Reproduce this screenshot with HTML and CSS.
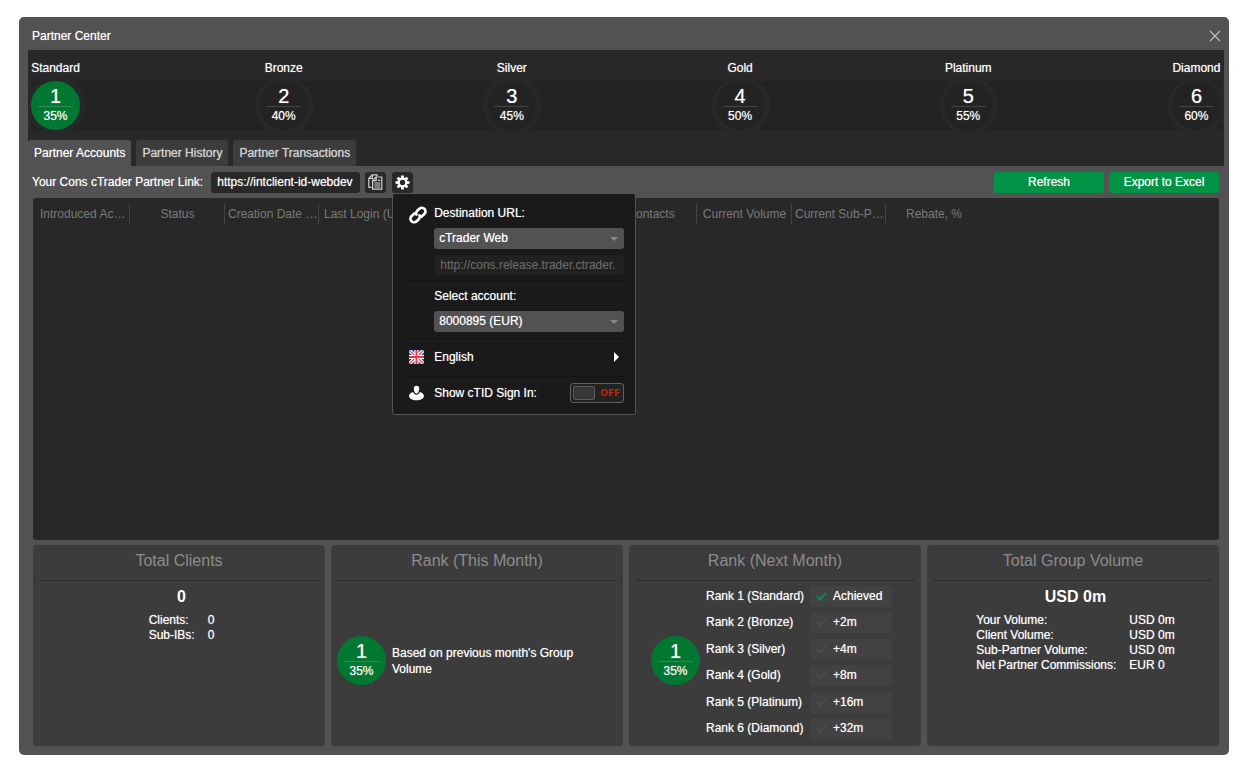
FILE: index.html
```
<!DOCTYPE html>
<html lang="en">
<head>
  <meta charset="UTF-8">
  <meta name="viewport" content="width=device-width, initial-scale=1.0">
  <title>Partner Center</title>
  <link rel="stylesheet" href="styles.css">
</head>
<body>
  <div class="window">
    <header class="titlebar">
      <h1>Partner Center</h1>
      <button type="button" class="close-btn" aria-label="Close">
        <svg width="12" height="12" viewBox="0 0 12 12"><path d="M1 1l10 10M11 1L1 11" stroke="#c4c4c4" stroke-width="1.1" fill="none"/></svg>
      </button>
    </header>

    <section class="ranks">
      <div class="rank-names">
        <span>Standard</span>
        <span>Bronze</span>
        <span>Silver</span>
        <span>Gold</span>
        <span>Platinum</span>
        <span>Diamond</span>
      </div>
      <div class="rank-track">
        <div class="badge active"><b>1</b><span>35%</span></div>
        <div class="badge"><b>2</b><span>40%</span></div>
        <div class="badge"><b>3</b><span>45%</span></div>
        <div class="badge"><b>4</b><span>50%</span></div>
        <div class="badge"><b>5</b><span>55%</span></div>
        <div class="badge"><b>6</b><span>60%</span></div>
      </div>
      <nav class="tabs">
        <button type="button" class="tab active">Partner Accounts</button>
        <button type="button" class="tab">Partner History</button>
        <button type="button" class="tab">Partner Transactions</button>
      </nav>
    </section>

    <div class="toolbar">
      <label for="partnerLink">Your Cons cTrader Partner Link:</label>
      <input type="text" id="partnerLink" class="link-input" value="https://intclient-id-webdev" readonly>
      <button type="button" class="icon-btn" aria-label="Copy link">
        <svg width="15" height="16" viewBox="0 0 15 16" fill="none" stroke="#d0d0d0" stroke-width="1.2">
          <path d="M3.500 13.400H.8V4.200L4.200.8H9V2.200M.8 4.400H4.300V.8"/>
          <path d="M4.600 6.400L8 3H13.800V15.200H4.600ZM4.600 6.600H8.200V3"/>
          <path d="M9.800 6.400H12.300M6.400 9H12.300M6.400 11H12.300M6.400 13H12.300"/>
        </svg>
      </button>
      <div class="settings">
        <button type="button" class="icon-btn" id="settingsBtn" aria-label="Link settings" aria-controls="settingsMenu">
          <svg width="15" height="15" viewBox="-7.500 -7.500 15 15">
            <g fill="#fff">
              <path id="tooth" d="M-1.300 -7H1.300L1.600 -4H-1.600Z"/>
              <use href="#tooth" transform="rotate(45)"/>
              <use href="#tooth" transform="rotate(90)"/>
              <use href="#tooth" transform="rotate(135)"/>
              <use href="#tooth" transform="rotate(180)"/>
              <use href="#tooth" transform="rotate(225)"/>
              <use href="#tooth" transform="rotate(270)"/>
              <use href="#tooth" transform="rotate(315)"/>
            </g>
            <circle r="3.800" fill="none" stroke="#fff" stroke-width="2.200"/>
          </svg>
        </button>

        <div class="menu" id="settingsMenu">
          <div class="menu-group">
            <svg class="menu-icon" width="20" height="20" viewBox="-10 -10 20 20" fill="none" stroke="#fff" stroke-width="2.700" stroke-linecap="round">
              <g transform="rotate(-43)">
                <path d="M-.8 -1.400A3.600 3.600 0 0 1 2.300 -3.600H5.300A3.600 3.600 0 0 1 5.300 3.600H2.300A3.600 3.600 0 0 1 .6 3"/>
                <path d="M.8 1.400A3.600 3.600 0 0 1 -2.300 3.600H-5.300A3.600 3.600 0 0 1 -5.300 -3.600H-2.300A3.600 3.600 0 0 1 -.6 -3"/>
              </g>
            </svg>
            <div class="menu-fields">
              <label for="destination">Destination URL:</label>
              <div class="select">
                <select id="destination">
                  <option>cTrader Web</option>
                </select>
              </div>
              <input type="text" class="url-input" value="http://cons.release.trader.ctrader." aria-label="URL" disabled>
            </div>
          </div>
          <div class="menu-group account">
            <span class="menu-icon"></span>
            <div class="menu-fields">
              <label for="account">Select account:</label>
              <div class="select">
                <select id="account">
                  <option>8000895 (EUR)</option>
                </select>
              </div>
            </div>
          </div>
          <button type="button" class="menu-row language">
            <svg class="menu-icon" width="20" height="16" viewBox="0 0 20 16">
              <clipPath id="flag"><rect x="1" y="1" width="15" height="14" rx="2"/></clipPath>
              <g clip-path="url(#flag)">
                <path d="M1 1H16V15H1Z" fill="#2c55b5"/>
                <path d="M1 1L16 15M16 1L1 15" stroke="#fff" stroke-width="3.400"/>
                <path d="M1 1L16 15M16 1L1 15" stroke="#ed3d45" stroke-width="1.200"/>
                <path d="M8.500 1V15M1 8H16" stroke="#fff" stroke-width="4"/>
                <path d="M8.500 1V15M1 8H16" stroke="#ee3640" stroke-width="2"/>
              </g>
            </svg>
            <span>English</span>
            <i class="arrow"></i>
          </button>
          <div class="menu-row">
            <svg class="menu-icon" width="20" height="16" viewBox="0 0 20 16" fill="#fff">
              <path d="M8.500 .8C10.300 .8 11.300 2 11.200 3.800C11.100 5.500 10.300 8.600 8.500 8.600C6.700 8.600 5.900 5.500 5.800 3.800C5.700 2 6.700 .8 8.500 .8Z"/>
              <path d="M5.200 7C5.800 9 7 9.700 8.500 9.700S11.200 9 11.800 7C14 7.500 15.900 8.900 15.900 11C15.900 13.600 13 15.200 8.500 15.200S1.100 13.600 1.100 11C1.100 8.900 3 7.500 5.200 7Z"/>
            </svg>
            <label for="showSignIn">Show cTID Sign In:</label>
            <label class="toggle">
              <input type="checkbox" id="showSignIn">
              <span>OFF</span>
            </label>
          </div>
        </div>
      </div>
      <div class="actions">
        <button type="button" class="green-btn">Refresh</button>
        <button type="button" class="green-btn">Export to Excel</button>
      </div>
    </div>

    <div class="table-wrap">
      <table>
        <thead>
          <tr>
            <th>Introduced Accounts</th>
            <th>Status</th>
            <th>Creation Date (UTC+0)</th>
            <th>Last Login (UTC+0)</th>
            <th>Country</th>
            <th>Balance</th>
            <th>Contacts</th>
            <th>Current Volume</th>
            <th>Current Sub-Partner Volume</th>
            <th>Rebate, %</th>
            <th class="filler"></th>
          </tr>
        </thead>
        <tbody></tbody>
      </table>
    </div>

    <div class="cards">
      <section class="card">
        <h2>Total Clients</h2>
        <div class="card-body">
          <p class="total">0</p>
          <table class="stats">
            <tr><th>Clients:</th><td>0</td></tr>
            <tr><th>Sub-IBs:</th><td>0</td></tr>
          </table>
        </div>
      </section>
      <section class="card">
        <h2>Rank (This Month)</h2>
        <div class="card-body rank-now">
          <div class="badge active"><b>1</b><span>35%</span></div>
          <p>Based on previous month's Group Volume</p>
        </div>
      </section>
      <section class="card">
        <h2>Rank (Next Month)</h2>
        <div class="card-body rank-next">
          <div class="badge active"><b>1</b><span>35%</span></div>
          <ul class="rank-list">
            <li>Rank 1 (Standard) <span class="pill done"><svg width="11" height="9" viewBox="0 0 11 9"><path d="M1 4.500L4 7.300L10 1"/></svg>Achieved</span></li>
            <li>Rank 2 (Bronze) <span class="pill"><svg width="11" height="9" viewBox="0 0 11 9"><path d="M1 4.500L4 7.300L10 1"/></svg>+2m</span></li>
            <li>Rank 3 (Silver) <span class="pill"><svg width="11" height="9" viewBox="0 0 11 9"><path d="M1 4.500L4 7.300L10 1"/></svg>+4m</span></li>
            <li>Rank 4 (Gold) <span class="pill"><svg width="11" height="9" viewBox="0 0 11 9"><path d="M1 4.500L4 7.300L10 1"/></svg>+8m</span></li>
            <li>Rank 5 (Platinum) <span class="pill"><svg width="11" height="9" viewBox="0 0 11 9"><path d="M1 4.500L4 7.300L10 1"/></svg>+16m</span></li>
            <li>Rank 6 (Diamond) <span class="pill"><svg width="11" height="9" viewBox="0 0 11 9"><path d="M1 4.500L4 7.300L10 1"/></svg>+32m</span></li>
          </ul>
        </div>
      </section>
      <section class="card">
        <h2>Total Group Volume</h2>
        <div class="card-body">
          <p class="total">USD 0m</p>
          <table class="stats">
            <tr><th>Your Volume:</th><td>USD 0m</td></tr>
            <tr><th>Client Volume:</th><td>USD 0m</td></tr>
            <tr><th>Sub-Partner Volume:</th><td>USD 0m</td></tr>
            <tr><th>Net Partner Commissions:</th><td>EUR 0</td></tr>
          </table>
        </div>
      </section>
    </div>
  </div>
</body>
</html>
```

FILE: styles.css
```
* {
  box-sizing: border-box;
}

body {
  margin: 0;
  padding: 17px 27px 23px 19px;
  background: #ffffff;
  color: #ffffff;
  font-family: "Liberation Sans", Arial, sans-serif;
  font-size: 12px;
  line-height: 15px;
  text-shadow: 0 0 1px rgba(255, 255, 255, 0.6);
}

h1, h2, p, ul {
  margin: 0;
  padding: 0;
  font-weight: normal;
}

button, input, select {
  margin: 0;
  padding: 0;
  border: none;
  color: inherit;
  font: inherit;
  text-shadow: inherit;
}

button {
  cursor: pointer;
}

.window {
  display: flex;
  flex-direction: column;
  min-height: calc(100vh - 40px);
  padding: 0 5px 9px 9px;
  border-radius: 5px;
  background: #525252;
}

.titlebar {
  display: flex;
  align-items: center;
  justify-content: space-between;
  height: 33px;
  padding: 4px 3px 0 4px;
}

.titlebar h1 {
  padding-top: 2px;
  font-size: 12px;
}

.close-btn {
  width: 12px;
  height: 12px;
  background: none;
}

.close-btn svg {
  display: block;
}

/* ranks */
.ranks {
  background: #282828;
}

.rank-names {
  display: flex;
  justify-content: space-between;
  padding: 11px 3px 5px;
}

.rank-names span {
  display: flex;
  justify-content: center;
  width: 49px;
}

.rank-track {
  display: flex;
  justify-content: space-between;
  margin: 0 3px;
  overflow: hidden;
  background: #232323;
}

.badge {
  display: flex;
  flex: none;
  flex-direction: column;
  align-items: center;
  width: 49px;
  height: 49px;
  padding-top: 5px;
  border-radius: 50%;
}

.badge b {
  width: 35px;
  height: 21px;
  border-bottom: 1px solid #444444;
  font-size: 20px;
  font-weight: normal;
  line-height: 20px;
  text-align: center;
}

.badge span {
  line-height: 18px;
}

.badge.active {
  background: #007832;
}

.badge.active b {
  border-color: #2b8d53;
}

.rank-track .badge {
  box-shadow: 0 0 0 4px #282828, 1px 0 0 4px #1d3328;
}

.tabs {
  display: flex;
  gap: 5px;
  padding-top: 10px;
}

.tab {
  height: 26px;
  padding: 0 6px;
  border-radius: 3px 3px 0 0;
  background: #3c3c3c;
  color: #d4d4d4;
}

.tab.active {
  background: #525252;
  color: #ffffff;
}

/* toolbar */
.toolbar {
  display: flex;
  align-items: center;
  height: 32px;
  padding: 0 5px 0 4px;
}

.link-input {
  width: 149px;
  height: 21px;
  margin: 0 5px 0 8px;
  padding: 0 6px;
  border-radius: 3px;
  background: #282828;
}

.icon-btn {
  display: flex;
  align-items: center;
  justify-content: center;
  width: 21px;
  height: 21px;
  border-radius: 3px;
  background: #282828;
}

.settings {
  position: relative;
  margin-left: 6px;
}

.actions {
  display: flex;
  gap: 5px;
  margin-left: auto;
}

.green-btn {
  width: 110px;
  height: 21px;
  border-radius: 3px;
  background: #009245;
}

/* settings menu */
.menu {
  position: absolute;
  top: 100%;
  left: 0;
  z-index: 1;
  width: 244px;
  padding: 0 11px 4px 12px;
  border: 1px solid #555555;
  border-radius: 3px;
  background: #1a1a1a;
}

.menu-group, .menu-row {
  display: flex;
  border-bottom: 1px solid #131313;
}

.menu-group {
  padding: 11px 0 5px 3px;
}

.menu-group.account {
  padding: 7px 0 0 3px;
}

.menu-row {
  align-items: center;
  width: 100%;
  height: 38px;
  padding-left: 3px;
  background: none;
}

.menu-row:last-child {
  height: 33px;
  border-bottom: none;
}

.menu-icon {
  flex: none;
  width: 20px;
  margin-right: 6px;
}

.menu-fields {
  flex: 1;
  min-width: 0;
}

.menu-fields label {
  display: block;
  line-height: 17px;
}

.select {
  position: relative;
  margin: 6px 0;
}

.select::after {
  content: "";
  position: absolute;
  top: 9px;
  right: 6px;
  border: 4px solid transparent;
  border-top-color: #888888;
  border-bottom: none;
  pointer-events: none;
}

.select select {
  display: block;
  appearance: none;
  width: 100%;
  height: 21px;
  padding: 0 5px;
  border-radius: 3px;
  background: #525252;
}

.url-input {
  display: block;
  width: 100%;
  height: 20px;
  padding: 0 6px;
  border-radius: 3px;
  background: #212121;
  color: #6f6f6f;
  text-shadow: none;
}

.arrow {
  margin: 0 5px 0 auto;
  border: 5px solid transparent;
  border-left-color: #ffffff;
  border-right: none;
}

.toggle {
  display: flex;
  align-items: center;
  justify-content: space-between;
  width: 54px;
  height: 20px;
  margin-left: auto;
  padding: 0 3px 0 2px;
  border: 1px solid #606060;
  border-radius: 3px;
  background: #222222;
}

.toggle input {
  appearance: none;
  width: 22px;
  height: 14px;
  border: 1px solid #5a5a5a;
  border-radius: 2px;
  background: #363636;
}

.toggle span {
  color: #c02408;
  font-family: "DejaVu Sans", sans-serif;
  font-size: 9px;
  font-weight: bold;
  text-shadow: none;
}

/* accounts table */
.table-wrap {
  flex: 1;
  margin: 0 5px;
  padding-top: 6px;
  border-radius: 3px;
  background: #282828;
}

.table-wrap table {
  width: 100%;
  table-layout: fixed;
  border-collapse: separate;
  border-spacing: 0;
}

.table-wrap th {
  width: 94px;
  height: 20px;
  padding: 0 0 0 3px;
  border-right: 1px solid #444444;
  overflow: hidden;
  color: #7a7a7a;
  font-weight: normal;
  text-overflow: ellipsis;
  text-shadow: none;
  white-space: nowrap;
}

.table-wrap th:nth-child(even) {
  width: 95px;
  padding: 0 4px 0 5px;
}

.table-wrap th:first-child {
  width: 97px;
  padding: 0 2px 0 7px;
}

.table-wrap th:nth-child(n + 10) {
  border-right: none;
}

.table-wrap .filler {
  width: auto;
}

/* cards */
.cards {
  display: grid;
  grid-template-columns: repeat(4, 1fr);
  gap: 6px;
  margin: 5px 5px 0;
}

.card {
  display: flex;
  flex-direction: column;
  min-height: 201px;
  padding: 0 6px 6px;
  border-radius: 4px;
  background: #3c3c3c;
}

.card h2 {
  height: 36px;
  border-bottom: 1px solid #2c2c2c;
  color: #8c8c8c;
  font-size: 16px;
  line-height: 32px;
  text-align: center;
  text-shadow: none;
}

.card-body {
  flex: 1;
  padding-left: 5px;
}

.total {
  margin: 6px 0;
  font-size: 16px;
  font-weight: bold;
  line-height: 20px;
  text-align: center;
  text-shadow: none;
}

.stats {
  margin: 0 auto;
  border-collapse: collapse;
}

.stats th, .stats td {
  padding: 0;
  font-weight: normal;
  text-align: left;
}

.stats td {
  padding-left: 13px;
}

.rank-now, .rank-next {
  display: flex;
  align-items: center;
  gap: 6px;
}

.rank-now {
  padding: 0;
}

.rank-now p {
  width: 200px;
  line-height: 16px;
}

.rank-next {
  justify-content: center;
  padding: 0 7px 0 0;
}

.rank-list {
  display: flex;
  flex-direction: column;
  align-self: stretch;
  justify-content: space-between;
  width: 186px;
  padding: 5px 0 1px;
  list-style: none;
}

.rank-list li {
  display: flex;
  justify-content: space-between;
  line-height: 21px;
}

.pill {
  display: flex;
  align-items: center;
  gap: 6px;
  width: 82px;
  height: 21px;
  padding-left: 6px;
  border-radius: 3px;
  background: #424242;
}

.pill path {
  fill: none;
  stroke: #4c4c4c;
  stroke-width: 2;
}

.pill.done path {
  stroke: #009245;
}
```
